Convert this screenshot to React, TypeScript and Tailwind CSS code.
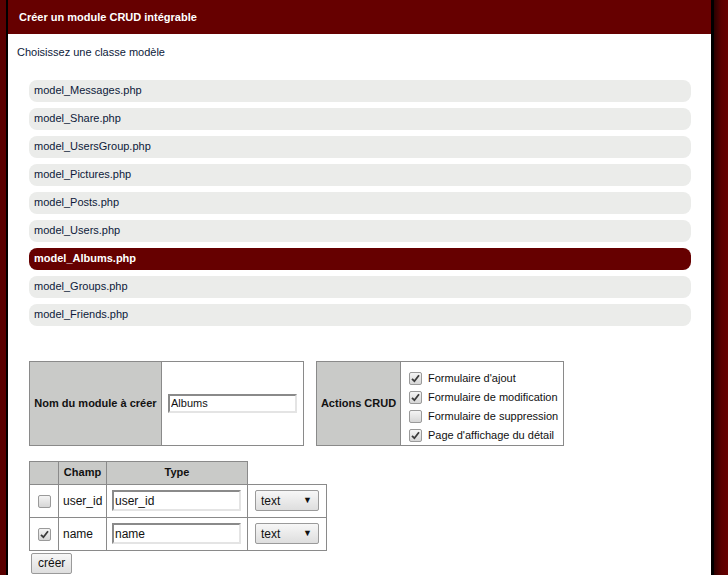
import React from 'react'

const models = [
  'model_Messages.php',
  'model_Share.php',
  'model_UsersGroup.php',
  'model_Pictures.php',
  'model_Posts.php',
  'model_Users.php',
  'model_Albums.php',
  'model_Groups.php',
  'model_Friends.php',
]

function Check({ checked }: { checked: boolean }) {
  return (
    <span className="inline-flex w-[13px] h-[13px] rounded-[2px] border border-[#9a9a9a] bg-gradient-to-b from-[#f4f4f4] to-[#d6d6d6] items-center justify-center shrink-0">
      {checked && (
        <svg width="9" height="9" viewBox="0 0 9 9">
          <path d="M1 4.8 L3.4 7.2 L8 1.2" fill="none" stroke="#3a3a3a" strokeWidth="1.8" />
        </svg>
      )}
    </span>
  )
}

function Select() {
  return (
    <div className="w-[64px] h-[21px] rounded-[2px] border border-[#9a9a9a] bg-gradient-to-b from-[#f7f7f7] to-[#dedede] flex items-center justify-between pl-[5px] pr-[6px] text-[12px] text-[#111]">
      <span>text</span>
      <span className="text-[9px]">▼</span>
    </div>
  )
}

export default function App() {
  const selected = 'model_Albums.php'
  const actions = [
    { label: "Formulaire d'ajout", checked: true },
    { label: 'Formulaire de modification', checked: true },
    { label: 'Formulaire de suppression', checked: false },
    { label: "Page d'affichage du détail", checked: true },
  ]
  const fields = [
    { name: 'user_id', checked: false },
    { name: 'name', checked: true },
  ]

  return (
    <div
      className="flex h-[575px] w-[728px] overflow-hidden bg-white text-[11px]"
      style={{ fontFamily: '"Liberation Sans", Arial, sans-serif' }}
    >
      <div className="w-[6px] bg-[#5a0000]" />
      <div className="w-[2px] bg-black" />
      <div className="flex-1 flex flex-col">
        {/* titre */}
        <div className="h-[34px] bg-[#660000] pl-[11px] flex items-center text-white font-bold text-[11px]">
          Créer un module CRUD intégrable
        </div>
        <div className="pl-[9px] pt-[10px] text-[#0d1a3a]">Choisissez une classe modèle</div>

        {/* liste des modeles */}
        <div className="ml-[21px] mr-[20px] mt-[19px] flex flex-col gap-[6px]">
          {models.map((m) =>
            m === selected ? (
              <div key={m} className="h-[22px] rounded-[8px] bg-[#660000] pl-[5px] flex items-center text-white font-bold">
                {m}
              </div>
            ) : (
              <div key={m} className="h-[22px] rounded-[8px] bg-[#ebecea] pl-[5px] flex items-center text-[#0d1a3a]">
                {m}
              </div>
            )
          )}
        </div>

        {/* nom + actions */}
        <div className="ml-[21px] mt-[35px] flex gap-[12px] items-start text-[#111]">
          <table className="border-collapse border border-[#8a8a8a] h-[85px]">
            <tbody>
              <tr>
                <th className="w-[132px] bg-[#c9cac8] border border-[#8a8a8a] font-bold text-[11px] px-[2px] whitespace-nowrap">Nom du module à créer</th>
                <td className="w-[141px] border border-[#8a8a8a] px-[6px]">
                  <input
                    readOnly
                    value="Albums"
                    className="w-[129px] h-[19px] border-2 border-t-[#8a8a8a] border-l-[#8a8a8a] border-b-[#e4e4e4] border-r-[#e4e4e4] px-[1px] text-[11px] text-[#111] outline-none"
                  />
                </td>
              </tr>
            </tbody>
          </table>

          <table className="border-collapse border border-[#8a8a8a] h-[85px]">
            <tbody>
              <tr>
                <th className="w-[84px] bg-[#c9cac8] border border-[#8a8a8a] font-bold text-[11px] whitespace-nowrap">Actions CRUD</th>
                <td className="w-[163px] border border-[#8a8a8a] pl-[8px]">
                  <div className="flex flex-col gap-[6px] pt-[8px]">
                    {actions.map((a) => (
                      <div key={a.label} className="flex items-center gap-[6px] h-[13px] whitespace-nowrap">
                        <Check checked={a.checked} />
                        <span>{a.label}</span>
                      </div>
                    ))}
                  </div>
                </td>
              </tr>
            </tbody>
          </table>
        </div>

        {/* champs */}
        <div className="ml-[21px] mt-[15px] text-[#111]">
          <table className="border-collapse">
            <tbody>
              <tr className="h-[23px]">
                <th className="w-[29px] bg-[#c9cac8] border border-[#8a8a8a]" />
                <th className="w-[48px] bg-[#c9cac8] border border-[#8a8a8a] font-bold">Champ</th>
                <th className="w-[141px] bg-[#c9cac8] border border-[#8a8a8a] font-bold">Type</th>
                <th className="w-[79px]" />
              </tr>
              {fields.map((f) => (
                <tr key={f.name} className="h-[33px]">
                  <td className="border border-[#8a8a8a] text-center">
                    <span className="inline-flex align-middle"><Check checked={f.checked} /></span>
                  </td>
                  <td className="border border-[#8a8a8a] pl-[4px] text-[12px]">{f.name}</td>
                  <td className="border border-[#8a8a8a] pl-[5px]">
                    <input
                      readOnly
                      value={f.name}
                      className="w-[129px] h-[21px] border-2 border-t-[#8a8a8a] border-l-[#8a8a8a] border-b-[#e4e4e4] border-r-[#e4e4e4] px-[1px] text-[12px] text-[#111] outline-none"
                    />
                  </td>
                  <td className="border border-[#8a8a8a] pl-[7px]">
                    <Select />
                  </td>
                </tr>
              ))}
            </tbody>
          </table>
          <button className="mt-[2px] ml-[2px] h-[21px] px-[6px] rounded-[2px] border border-[#9a9a9a] bg-gradient-to-b from-[#f7f7f7] to-[#dedede] text-[12px] text-[#111]">
            créer
          </button>
        </div>
      </div>
      <div className="w-[3px] bg-black" />
      <div className="w-[14px] bg-gradient-to-r from-[#2a0000] via-[#5a0000] to-[#660000]" />
    </div>
  )
}
